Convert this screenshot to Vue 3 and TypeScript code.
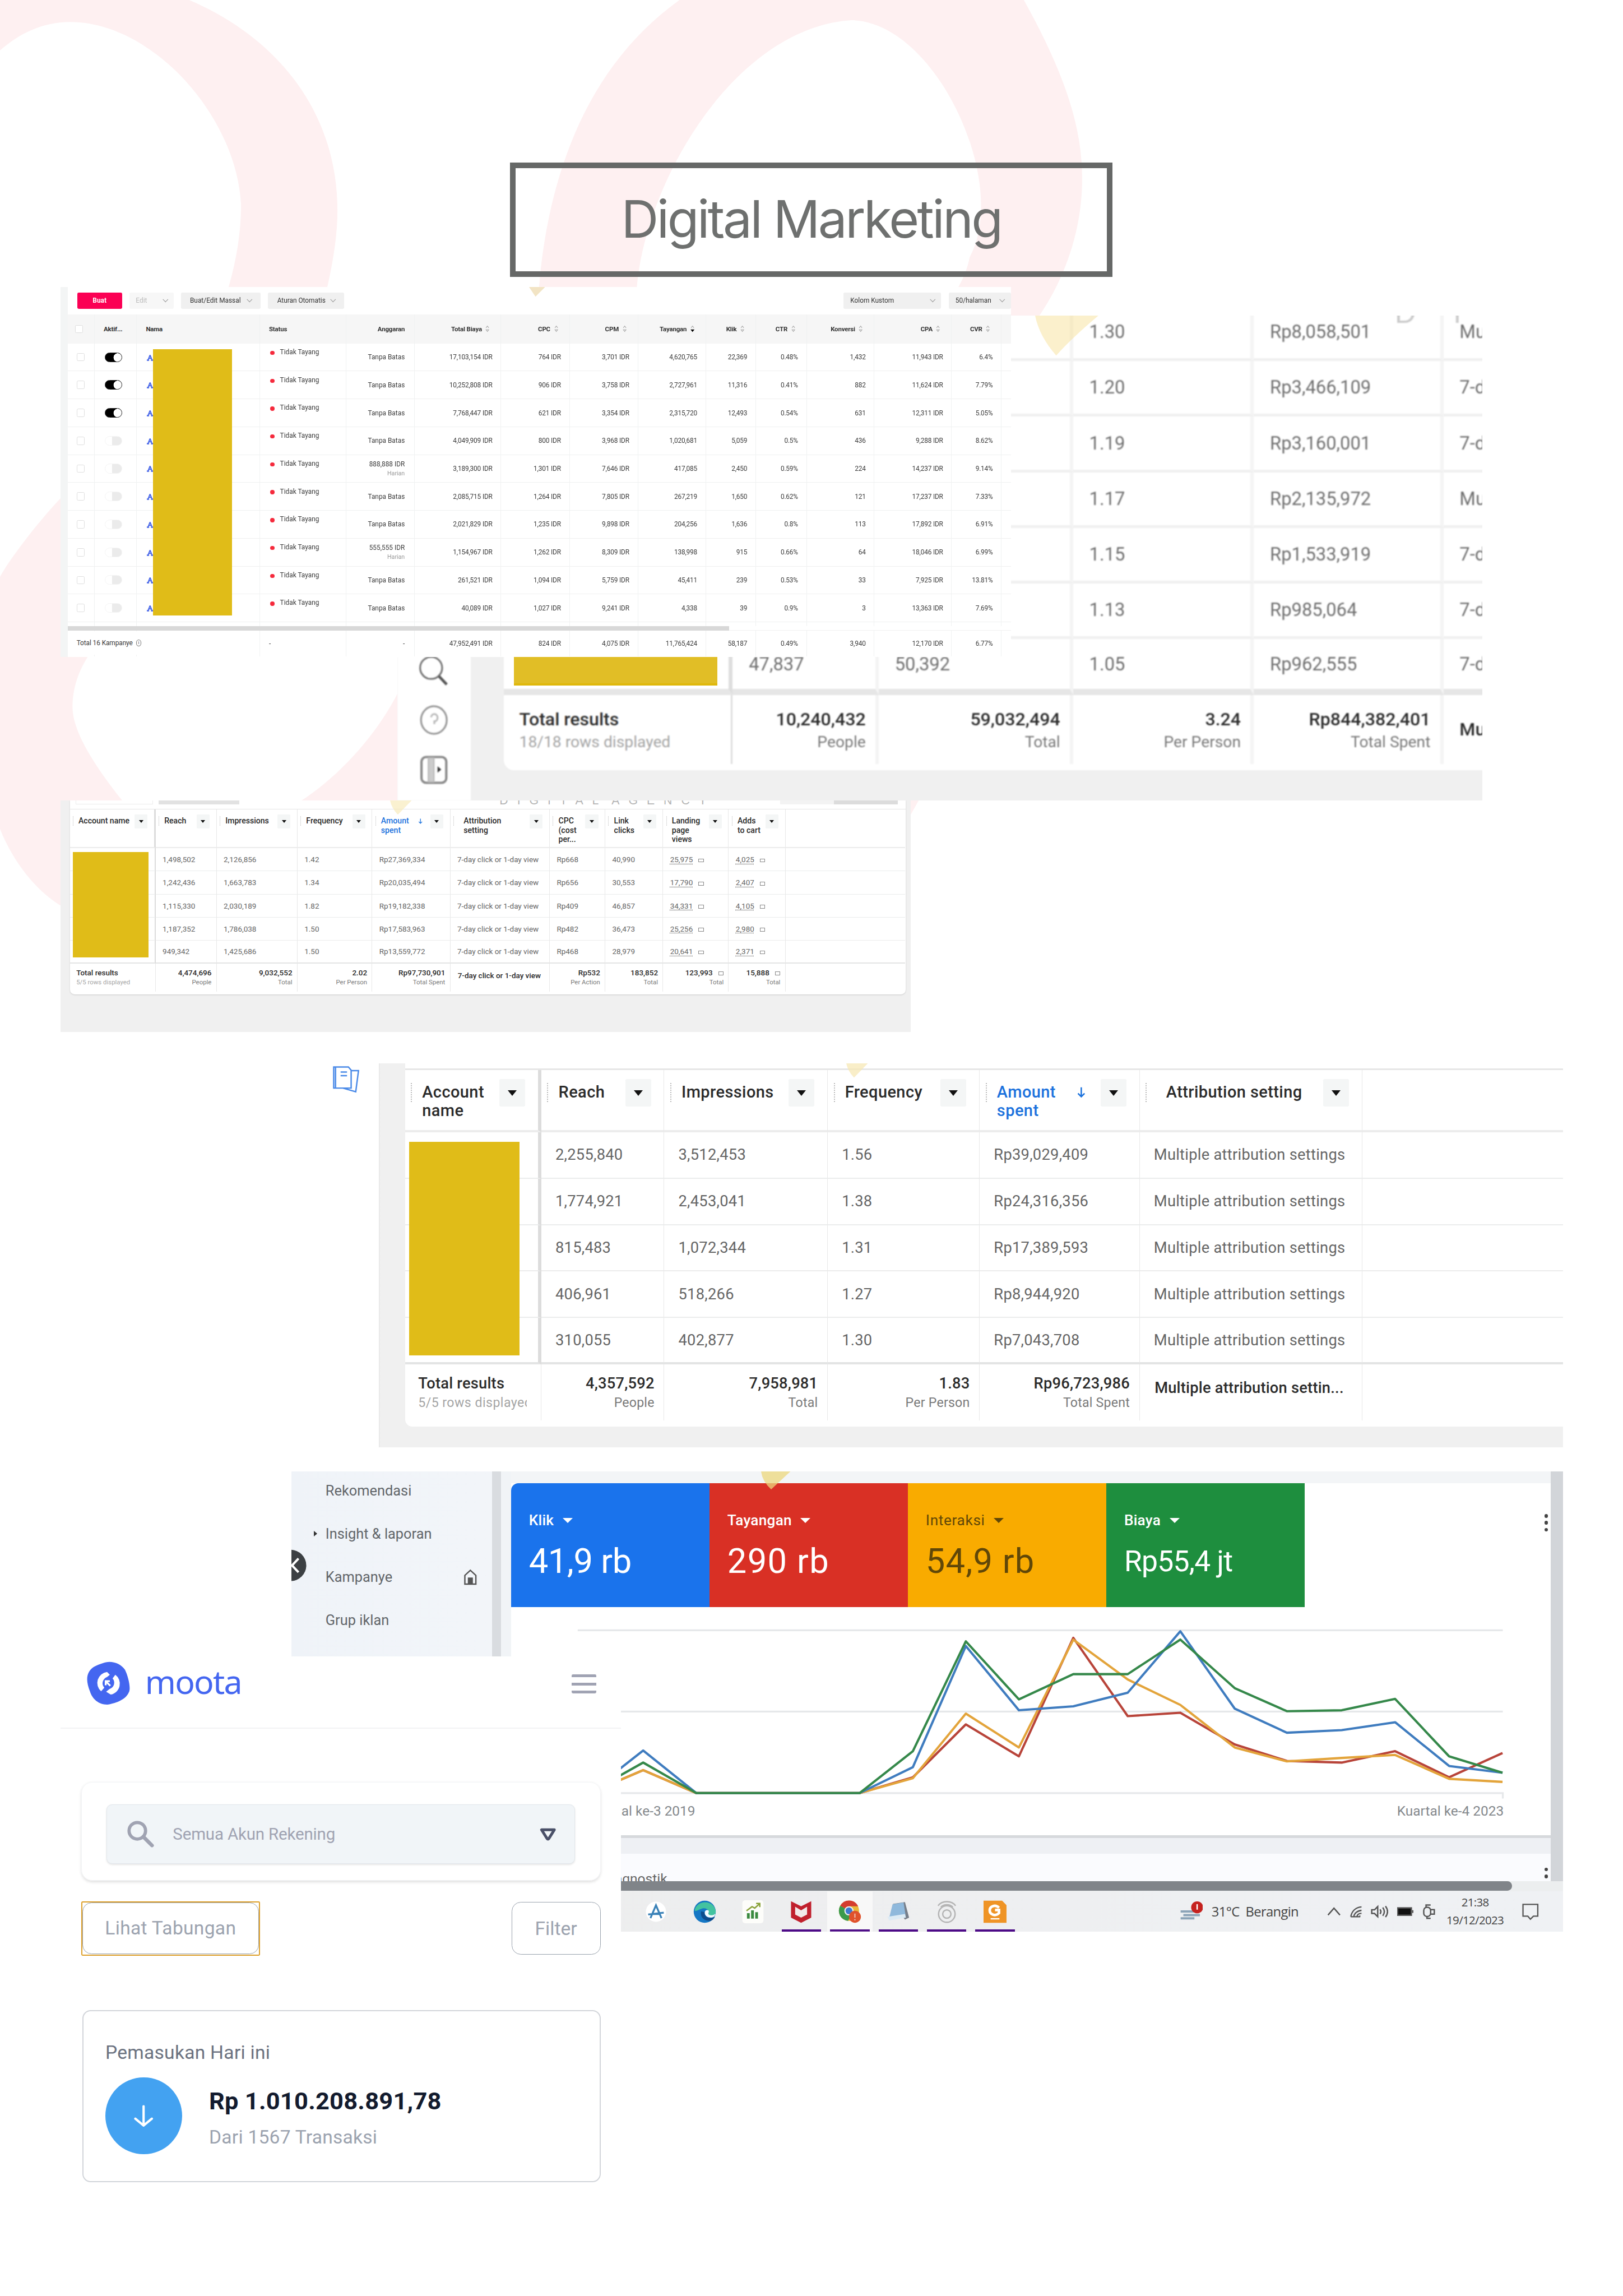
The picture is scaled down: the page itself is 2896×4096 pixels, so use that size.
<script setup lang="ts">
interface CampaignColumn {
  title: string
  width: number
  kind: 'check' | 'toggle' | 'name' | 'status' | 'budget' | 'number' | 'end'
  cells: string[]
  total: string
  sort?: 'idle' | 'desc'
}
interface AdsColumn {
  width: number
  head?: string[]
  sorted?: boolean
  frozen?: boolean
  link?: boolean
  indent?: number
  cells: string[]
  total?: string
  sub?: string
  align?: 'left' | 'right' | 'middle'
}

const blank = (n: number): string[] => Array.from({ length: n }, () => '')
const same = (text: string, n: number): string[] => Array.from({ length: n }, () => text)

/* Letter spacing that makes a line of text as wide as asked. */
function fit(text: string, font: string, width: number) {
  const ctx = document.createElement('canvas').getContext('2d')
  if (!ctx) return {}
  ctx.font = font
  const gap = (width - ctx.measureText(text).width) / (text.length - 1)
  return { letterSpacing: gap.toFixed(2) + 'px' }
}

const campaigns: CampaignColumn[] = [
  { title: '', width: 58, kind: 'check', cells: blank(10), total: '' },
  { title: 'Aktif...', width: 92, kind: 'toggle', cells: ['on', 'on', 'on', '', '', '', '', '', '', ''], total: '' },
  { title: 'Nama', width: 268, kind: 'name', cells: blank(10), total: '' },
  { title: 'Status', width: 188, kind: 'status', cells: same('Tidak Tayang', 10), total: '-' },
  {
    title: 'Anggaran', width: 149, kind: 'budget', total: '-',
    cells: ['Tanpa Batas', 'Tanpa Batas', 'Tanpa Batas', 'Tanpa Batas', '888,888 IDR', 'Tanpa Batas', 'Tanpa Batas', '555,555 IDR', 'Tanpa Batas', 'Tanpa Batas'],
  },
  {
    title: 'Total Biaya', width: 189, kind: 'number', sort: 'idle', total: '47,952,491 IDR',
    cells: ['17,103,154 IDR', '10,252,808 IDR', '7,768,447 IDR', '4,049,909 IDR', '3,189,300 IDR', '2,085,715 IDR', '2,021,829 IDR', '1,154,967 IDR', '261,521 IDR', '40,089 IDR'],
  },
  {
    title: 'CPC', width: 149, kind: 'number', sort: 'idle', total: '824 IDR',
    cells: ['764 IDR', '906 IDR', '621 IDR', '800 IDR', '1,301 IDR', '1,264 IDR', '1,235 IDR', '1,262 IDR', '1,094 IDR', '1,027 IDR'],
  },
  {
    title: 'CPM', width: 149, kind: 'number', sort: 'idle', total: '4,075 IDR',
    cells: ['3,701 IDR', '3,758 IDR', '3,354 IDR', '3,968 IDR', '7,646 IDR', '7,805 IDR', '9,898 IDR', '8,309 IDR', '5,759 IDR', '9,241 IDR'],
  },
  {
    title: 'Tayangan', width: 148, kind: 'number', sort: 'desc', total: '11,765,424',
    cells: ['4,620,765', '2,727,961', '2,315,720', '1,020,681', '417,085', '267,219', '204,256', '138,998', '45,411', '4,338'],
  },
  {
    title: 'Klik', width: 109, kind: 'number', sort: 'idle', total: '58,187',
    cells: ['22,369', '11,316', '12,493', '5,059', '2,450', '1,650', '1,636', '915', '239', '39'],
  },
  {
    title: 'CTR', width: 110.5, kind: 'number', sort: 'idle', total: '0.49%',
    cells: ['0.48%', '0.41%', '0.54%', '0.5%', '0.59%', '0.62%', '0.8%', '0.66%', '0.53%', '0.9%'],
  },
  {
    title: 'Konversi', width: 147.5, kind: 'number', sort: 'idle', total: '3,940',
    cells: ['1,432', '882', '631', '436', '224', '121', '113', '64', '33', '3'],
  },
  {
    title: 'CPA', width: 168.5, kind: 'number', sort: 'idle', total: '12,170 IDR',
    cells: ['11,943 IDR', '11,624 IDR', '12,311 IDR', '9,288 IDR', '14,237 IDR', '17,237 IDR', '17,892 IDR', '18,046 IDR', '7,925 IDR', '13,363 IDR'],
  },
  {
    title: 'CVR', width: 108.5, kind: 'number', sort: 'idle', total: '6.77%',
    cells: ['6.4%', '7.79%', '5.05%', '8.62%', '9.14%', '7.33%', '6.91%', '6.99%', '13.81%', '7.69%'],
  },
  { title: '', width: 20, kind: 'end', cells: blank(10), total: '' },
]

const adsWide: AdsColumn[] = [
  { width: 499, frozen: true, cells: blank(7), total: 'Total results', sub: '18/18 rows displayed', align: 'left' },
  { width: 318, cells: ['', '', '', '', '', '', '47,837'], total: '10,240,432', sub: 'People' },
  { width: 423.5, cells: ['', '', '', '', '', '', '50,392'], total: '59,032,494', sub: 'Total' },
  { width: 393.5, cells: ['1.30', '1.20', '1.19', '1.17', '1.15', '1.13', '1.05'], total: '3.24', sub: 'Per Person' },
  {
    width: 413, total: 'Rp844,382,401', sub: 'Total Spent',
    cells: ['Rp8,058,501', 'Rp3,466,109', 'Rp3,160,001', 'Rp2,135,972', 'Rp1,533,919', 'Rp985,064', 'Rp962,555'],
  },
  { width: 400, cells: ['Multiple', '7-day click', '7-day click', 'Multiple', '7-day click', '7-day click', '7-day click'], total: 'Multiple', align: 'middle' },
]

const adsSmall: AdsColumn[] = [
  { width: 187, head: ['Account name'], frozen: true, cells: blank(5), total: 'Total results', sub: '5/5 rows displayed', align: 'left' },
  { width: 133, head: ['Reach'], cells: ['1,498,502', '1,242,436', '1,115,330', '1,187,352', '949,342'], total: '4,474,696', sub: 'People' },
  { width: 176, head: ['Impressions'], cells: ['2,126,856', '1,663,783', '2,030,189', '1,786,038', '1,425,686'], total: '9,032,552', sub: 'Total' },
  { width: 163, head: ['Frequency'], cells: ['1.42', '1.34', '1.82', '1.50', '1.50'], total: '2.02', sub: 'Per Person' },
  {
    width: 170, head: ['Amount', 'spent'], sorted: true, total: 'Rp97,730,901', sub: 'Total Spent',
    cells: ['Rp27,369,334', 'Rp20,035,494', 'Rp19,182,338', 'Rp17,583,963', 'Rp13,559,772'],
  },
  { width: 216.5, head: ['Attribution', 'setting'], indent: 10, cells: same('7-day click or 1-day view', 5), total: '7-day click or 1-day view', align: 'middle' },
  { width: 121, head: ['CPC', '(cost', 'per...'], cells: ['Rp668', 'Rp656', 'Rp409', 'Rp482', 'Rp468'], total: 'Rp532', sub: 'Per Action' },
  { width: 126, head: ['Link', 'clicks'], cells: ['40,990', '30,553', '46,857', '36,473', '28,979'], total: '183,852', sub: 'Total' },
  { width: 143, head: ['Landing', 'page', 'views'], link: true, cells: ['25,975', '17,790', '34,331', '25,256', '20,641'], total: '123,993', sub: 'Total' },
  { width: 123.5, head: ['Adds', 'to cart'], link: true, cells: ['4,025', '2,407', '4,105', '2,980', '2,371'], total: '15,888', sub: 'Total' },
  { width: 261, cells: blank(5) },
]

const adsLarge: AdsColumn[] = [
  { width: 297, head: ['Account', 'name'], frozen: true, cells: blank(5), total: 'Total results', sub: '5/5 rows displayed', align: 'left' },
  { width: 268, head: ['Reach'], cells: ['2,255,840', '1,774,921', '815,483', '406,961', '310,055'], total: '4,357,592', sub: 'People' },
  { width: 356, head: ['Impressions'], cells: ['3,512,453', '2,453,041', '1,072,344', '518,266', '402,877'], total: '7,958,981', sub: 'Total' },
  { width: 331, head: ['Frequency'], cells: ['1.56', '1.38', '1.31', '1.27', '1.30'], total: '1.83', sub: 'Per Person' },
  {
    width: 348.5, head: ['Amount', 'spent'], sorted: true, total: 'Rp96,723,986', sub: 'Total Spent',
    cells: ['Rp39,029,409', 'Rp24,316,356', 'Rp17,389,593', 'Rp8,944,920', 'Rp7,043,708'],
  },
  { width: 485, head: ['Attribution setting'], indent: 20, cells: same('Multiple attribution settings', 5), total: 'Multiple attribution settin...', align: 'middle' },
  { width: 439, cells: blank(5) },
]

const adsPanels = [
  { name: 'small', columns: adsSmall },
  { name: 'large', columns: adsLarge },
]

const metrics = [
  { label: 'Klik', value: '41,9 rb', tone: 'blue', size: 75, width: 224 },
  { label: 'Tayangan', value: '290 rb', tone: 'red', size: 75, width: 221 },
  { label: 'Interaksi', value: '54,9 rb', tone: 'amber', size: 75, width: 236 },
  { label: 'Biaya', value: 'Rp55,4 jt', tone: 'green', size: 63, width: 237 },
]

const quarters = [1284, 1400.6, 1516.4, 1872, 1988, 2103.4, 2219, 2337.5, 2456, 2570.6, 2689, 2802.7, 2922, 3038.5, 3156, 3272.4]
const series = [
  { color: '#b8443a', ys: [3904, 3854, 3904, 3904, 3869.7, 3754.5, 3824, 3566, 3736.4, 3729, 3798, 3834, 3837.6, 3812.8, 3869.7, 3816.8] },
  { color: '#e3a43b', ys: [3904, 3854, 3904, 3904, 3871.7, 3731, 3804.7, 3570, 3656.7, 3712, 3804.7, 3835, 3827.5, 3821, 3873, 3879.7] },
  { color: '#3f7cbf', ys: [3903, 3811.4, 3904, 3904, 3847.6, 3583.8, 3723.7, 3715, 3685.5, 3551.6, 3720, 3772.6, 3767, 3749.8, 3845, 3859.7] },
  { color: '#35884a', ys: [3903, 3837.6, 3904, 3904, 3812.8, 3573.7, 3700, 3645, 3645, 3569.7, 3675.5, 3725.7, 3723.7, 3699, 3824, 3859.7] },
]
const points = (ys: number[]): string => ys.map((y, i) => `${quarters[i]},${y}`).join(' ')
</script>

<template>
  <div class="stage">
    <div class="canvas">
      <svg class="backdrop" viewBox="0 0 3535 5000" aria-hidden="true">
        <g fill="#fef0f1">
          <path d="M0 0H412C600 80 735 240 735 459C735 560 700 700 640 860L400 860C460 740 525 600 525 446C515 250 330 48 153 48C90 48 40 75 0 110Z" />
          <path d="M132 1085C80 1140 20 1220 0 1256V1805C30 1880 80 1940 132 1972V1743H266C200 1660 158 1590 158 1540C158 1500 170 1460 198 1420L300 1000Z" />
          <path d="M866 1510C820 1600 740 1690 654 1745H866Z" />
          <path d="M1173 640C1190 400 1270 150 1480 0H2230C2330 180 2357 290 2357 390C2357 500 2320 610 2255 700H2040C2074 640 2100 620 2112 560C2200 400 2040 48 1855 44C1600 60 1400 400 1386 640Z" />
          <path d="M1983 1743H2001L1983 1775Z" />
        </g>
      </svg>

      <h1 class="title"><span :style="fit('Digital Marketing', '400 113px Inter', 832)">Digital Marketing</span></h1>

      <!-- Ads table behind the campaign list -->
      <section class="panel wide">
        <aside class="rail">
          <svg viewBox="0 0 64 72" width="64" height="72" fill="none" stroke="#777" stroke-width="4">
            <circle cx="26" cy="30" r="24" /><path d="M43 48L60 66" stroke="#555" stroke-width="6" />
          </svg>
          <svg viewBox="0 0 64 72" width="64" height="72" fill="none" stroke="#999" stroke-width="4">
            <ellipse cx="32" cy="36" rx="28" ry="30" /><path d="M26 30a7 8 0 1 1 7 9v6" stroke="#bbb" />
          </svg>
          <svg viewBox="0 0 64 72" width="64" height="72" fill="none" stroke="#888" stroke-width="5">
            <rect x="5" y="8" width="54" height="56" rx="10" /><path d="M20 10h12v52h-12z" fill="#ccc" stroke="#bbb" stroke-width="3" /><path d="M40 28l8 7-8 7z" fill="#333" stroke="none" />
          </svg>
        </aside>
        <div class="board">
          <div class="ads">
            <div v-for="(c, i) in adsWide" :key="i" class="col" :class="{ frozen: c.frozen }" :style="{ width: c.width + 'px' }">
              <div v-for="(v, r) in c.cells" :key="r" class="cell">{{ v }}</div>
              <div class="sum" :class="c.align"><b>{{ c.total }}</b><span v-if="c.sub">{{ c.sub }}</span></div>
            </div>
          </div>
        </div>
        <div class="mask"></div>
        <div class="agency">DI</div>
        <svg class="drip" viewBox="0 0 138 87" width="138" height="87"><path d="M0 0H138C105 28 75 55 46 87C22 60 6 30 0 0Z" fill="#f5dc86" opacity=".42" /></svg>
      </section>

      <!-- Campaign list -->
      <section class="panel campaigns">
        <div class="bar">
          <span class="btn primary">Buat</span>
          <span class="btn muted" style="width: 96px">Edit<i class="chev"></i></span>
          <span class="btn" style="width: 174px">Buat/Edit Massal<i class="chev"></i></span>
          <span class="btn" style="width: 166px">Aturan Otomatis<i class="chev"></i></span>
          <span class="btn push" style="width: 213px">Kolom Kustom<i class="chev"></i></span>
          <span class="btn last" style="width: 136px">50/halaman<i class="chev"></i></span>
        </div>
        <div class="list">
          <div v-for="(c, i) in campaigns" :key="i" class="ccol" :class="c.kind" :style="{ width: c.width + 'px' }">
            <div class="chead">
              <i v-if="c.kind === 'check'" class="box"></i>
              <span>{{ c.title }}</span>
              <svg v-if="c.sort" viewBox="0 0 8 16" width="9" height="16" fill="none" stroke="#aaa" stroke-width="1.3">
                <path d="M1 6L4 2L7 6" /><path :fill="c.sort === 'desc' ? '#000' : 'none'" :stroke="c.sort === 'desc' ? '#000' : '#aaa'" d="M1 10L4 14L7 10Z" />
              </svg>
            </div>
            <div v-for="(v, r) in c.cells" :key="r" class="ccell">
              <i v-if="c.kind === 'check'" class="box"></i>
              <i v-else-if="c.kind === 'toggle'" class="toggle" :class="{ on: v }"></i>
              <svg v-else-if="c.kind === 'name'" viewBox="0 0 14 16" width="14" height="16" fill="none" stroke="#4a68e8" stroke-width="2.5">
                <path d="M7 3L3 13M7 3l4 10M4 10h6" /><path d="M0 14h5M9 14h5" stroke-width="3" />
              </svg>
              <template v-else-if="c.kind === 'status'"><i class="dot"></i><span>{{ v }}</span></template>
              <template v-else-if="c.kind === 'budget'"><span>{{ v }}</span><small v-if="v.endsWith('IDR')">Harian</small></template>
              <span v-else>{{ v }}</span>
            </div>
            <div class="cgap"></div>
            <div class="cfoot">{{ c.total }}</div>
          </div>
          <div class="count">Total 16 Kampanye <i>i</i></div>
          <div class="track"><i></i></div>
          <div class="mask"></div>
        </div>
        <svg class="drip" viewBox="0 0 35 21" width="35" height="21"><path d="M0 0H35L14 21Z" fill="#f2e4c4" /></svg>
      </section>

      <!-- Ads tables with headers -->
      <section v-for="p in adsPanels" :key="p.name" class="panel" :class="p.name">
        <svg v-if="p.name === 'large'" class="notes" viewBox="0 0 60 60" width="60" height="60" fill="none" stroke="#4a8ae8" stroke-width="3">
          <path d="M3 3h4v46H3zM7 3h28l6 7v39H7zM18 14h14M18 22h14M41 11h16l-6 46-28-8" />
        </svg>
        <div class="board">
          <div class="ads">
            <div v-for="(c, i) in p.columns" :key="i" class="col" :class="{ frozen: c.frozen }" :style="{ width: c.width + 'px' }">
              <div class="head">
                <template v-if="c.head">
                  <i class="grip"></i>
                  <span class="name" :class="{ sorted: c.sorted }" :style="{ marginLeft: (c.indent ?? 0) + 'px' }">
                    <span v-for="line in c.head" :key="line">{{ line }}</span>
                  </span>
                  <svg v-if="c.sorted" class="arrow" viewBox="0 0 20 24" fill="none" stroke="#1c72dd" stroke-width="3"><path d="M10 1v20M3 14l7 7 7-7" /></svg>
                  <i class="menu"></i>
                </template>
              </div>
              <div v-for="(v, r) in c.cells" :key="r" class="cell">
                <u v-if="c.link">{{ v }}</u><template v-else>{{ v }}</template><i v-if="c.link" class="tag"></i>
              </div>
              <div class="sum" :class="c.align"><b>{{ c.total }}<i v-if="c.link" class="tag"></i></b><span v-if="c.sub">{{ c.sub }}</span></div>
            </div>
          </div>
        </div>
        <div class="mask"></div>
        <template v-if="p.name === 'small'">
          <div class="scraps"><i></i><i></i><i></i><i></i></div>
          <div class="agency">DIGITAL AGENCY</div>
        </template>
        <svg class="drip" viewBox="0 0 47 31" width="47" height="31"><path d="M0 0H47L17 31Q4 18 0 0Z" fill="#f7e7b0" opacity=".7" /></svg>
      </section>

      <!-- Search ads overview -->
      <section class="panel google">
        <div class="screen">
          <nav>
            <span>Rekomendasi</span>
            <span class="open">Insight &amp; laporan</span>
            <span>Kampanye
              <svg viewBox="0 0 30 36" width="30" height="36" fill="none" stroke="#555" stroke-width="3"><path d="M3 33V14L15 3l12 11v19z" /><path d="M11 33V20h8v13" fill="#555" /></svg>
            </span>
            <span>Grup iklan</span>
          </nav>
          <div class="fold"><svg viewBox="0 0 70 70" width="70" height="70"><circle cx="35" cy="35" r="34" fill="#3c4043" /><path d="M52 20L38 35L52 50" fill="none" stroke="#fff" stroke-width="5" /></svg></div>
          <i class="gutter"></i>
          <div class="report">
            <div class="metrics">
              <div v-for="m in metrics" :key="m.label" class="metric" :class="m.tone">
                <span>{{ m.label }}<i></i></span>
                <strong :style="{ fontSize: m.size + 'px', ...fit(m.value, `400 ${m.size}px Roboto`, m.width) }">{{ m.value }}</strong>
              </div>
              <i class="dots"><b></b><b></b><b></b></i>
            </div>
            <svg class="chart" viewBox="1113 3499 2265 498" width="2265" height="498">
              <g stroke="#e6e8ea" stroke-width="4"><path d="M1258 3549.6H3273M1258 3726.4H3273M1258 3904H3273V3916" fill="none" /></g>
              <polyline v-for="s in series" :key="s.color" :points="points(s.ys)" fill="none" :stroke="s.color" stroke-width="5" stroke-linejoin="round" />
              <g font-family="Roboto, sans-serif" font-size="29.8" fill="#85898d" text-anchor="end">
                <text x="1514" y="3953">Kuartal ke-3 2019</text><text x="3275" y="3953">Kuartal ke-4 2023</text>
              </g>
            </svg>
            <div class="below"><span>Diagnostik</span><i class="dots"><b></b><b></b></i></div>
          </div>
          <i class="scroller"></i>
        </div>
        <div class="hscroll"><i></i></div>
        <div class="taskbar">
          <span class="app"><svg viewBox="0 0 50 50"><circle cx="25" cy="25" r="22" fill="#fff" /><path d="M13 39L25 11l12 28M16 30h19M8 31l34-4" fill="none" stroke="#3b82b8" stroke-width="4" /></svg></span>
          <span class="app"><svg viewBox="0 0 50 50"><circle cx="25" cy="25" r="24" fill="#1577c4" /><path d="M3 22C8-2 46-2 49 25c0 9-14 11-16 5 4-9-7-16-16-11C9 22 4 25 3 22z" fill="#43c3a0" /><path d="M17 24c-3 14 8 22 21 21 5-2 8-6 9-9-10 5-24 1-22-10z" fill="#0f4c8c" /><path d="M25 27c0-4 4-7 8-5 3 4-2 7 1 9 4 3 11 2 14-2-1 7-4 8-9 9-8 0-14-4-14-11z" fill="#f4fbff" /></svg></span>
          <span class="app"><svg viewBox="0 0 50 50"><rect x="2" width="46" height="50" rx="6" fill="#fdfdfa" /><path d="M15 40V28M24 40V22M33 40V26" stroke="#3a8a3f" stroke-width="6" /><path d="M11 23L23 14l6 3 10-9M32 7h8v8" fill="none" stroke="#8ba33a" stroke-width="3" /></svg></span>
          <span class="app run"><svg viewBox="0 0 50 50"><path d="M3 2l22 11L47 2v36L25 49 3 38z" fill="#c0202d" /><path d="M12 14l13 8 13-8v17l-13 7-13-7z" fill="#f1e9e9" /></svg></span>
          <span class="app run active"><svg viewBox="0 0 50 50"><circle cx="23" cy="23" r="22" fill="#e8b93a" /><path d="M23 23L4 12A22 22 0 0 1 43 13H23z" fill="#d43d2f" /><path d="M4 12A22 22 0 0 0 21 45l9-17-7-5z" fill="#3b9a4c" /><circle cx="23" cy="23" r="10" fill="#f3f3f3" /><circle cx="23" cy="23" r="7.500" fill="#3f7ad0" /><circle cx="36" cy="36" r="13" fill="#e0522c" /><path d="M36 29v9M36 41v3" stroke="#f5d9cf" stroke-width="2" /></svg></span>
          <span class="app run"><svg viewBox="0 0 50 50"><path d="M14 8l26-4 9 34-9 4z" fill="#777f8a" /><path d="M13 9l24-4 5 32-37 4z" fill="#8fb9dc" /><path d="M2 36l38-6 2 8-36 6z" fill="#dcebf5" /></svg></span>
          <span class="app run"><svg viewBox="0 0 50 50" fill="none" stroke="#b4b4b4" stroke-width="3"><circle cx="25" cy="30" r="18" /><circle cx="25" cy="30" r="9" /><path d="M6 12c8-12 30-12 38 0M12 15c6-7 20-7 26 0" /></svg></span>
          <span class="app run"><svg viewBox="0 0 52 50"><path d="M0 0h42l10 10v40H0z" fill="#ef9426" /><path d="M35 16c-8-8-21-4-21 6s13 14 21 6V21h-9" fill="none" stroke="#fff" stroke-width="6" /><path d="M16 41h20" stroke="#fff" stroke-width="3" /></svg></span>
          <span class="weather">
            <svg viewBox="0 0 50 44" width="50" height="44"><path d="M2 22h34M8 30h36M2 37h30" stroke="#8ca4b8" stroke-width="5" /><circle cx="38" cy="13" r="13" fill="#c5221f" /><path d="M38 6v12" stroke="#fff" stroke-width="3" /></svg>
            31°C&nbsp; Berangin
          </span>
          <span class="tray">
            <svg viewBox="0 0 30 24" width="30" height="24"><path d="M2 20L15 5l13 15" /></svg>
            <svg viewBox="0 0 30 30" width="28" height="30"><path d="M3 27C5 14 14 5 28 4M10 27c1-8 8-14 18-15M17 27c1-5 5-8 11-8M24 27v-3M3 27h22" /></svg>
            <svg viewBox="0 0 38 30" width="38" height="30"><path d="M2 11h6l7-7v22l-7-7H2zM20 10q4 5 0 10M26 6q7 9 0 18M32 3q9 12 0 24" /></svg>
            <svg viewBox="0 0 36 20" width="36" height="20"><rect x="1" y="2" width="30" height="16" fill="#111" /><path d="M34 7v6" /></svg>
            <svg viewBox="0 0 30 34" width="30" height="34"><rect x="3" y="8" width="15" height="20" rx="7" /><path d="M8 8V3h10M18 13h8v10h-8M10 28v4h8" /></svg>
          </span>
          <span class="clock"><span>21:38</span><span>19/12/2023</span></span>
          <svg viewBox="0 0 38 40" width="36" height="38" class="note"><path d="M2 3h34v27H26l-7 7-6-7H2z" /></svg>
        </div>
        <div class="agency">DIGITAL AGENCY</div>
        <svg class="drip" viewBox="0 0 64 39" width="64" height="39"><path d="M0 0H64L22 39Q3 22 0 0Z" fill="#ecd77c" opacity=".75" /></svg>
      </section>

      <!-- Bank account app -->
      <section class="panel moota">
        <header>
          <svg viewBox="0 0 94 94" width="94" height="94">
            <path d="M34 4C50-3 72 2 83 18C90 32 97 60 91 68C84 84 60 92 44 94C26 94 12 82 7 66C0 48-2 34 5 22C11 12 22 8 34 4Z" fill="#4466f0" />
            <path d="M44 23A24 24 0 0 0 31 65L38 57A14 14 0 0 1 44 34L50 29Z" fill="#fff" />
            <path d="M52 72A24 24 0 0 0 62 29L56 37A14 14 0 0 1 49 60L42 66Z" fill="#fff" />
            <path d="M41 52V43H50M42 44L51 53" fill="none" stroke="#fff" stroke-width="4" />
          </svg>
          <span class="logo" :style="fit('moota', '400 72px Noto Sans', 212)">moota</span>
          <i class="burger"></i>
        </header>
        <div class="finder">
          <div class="field">
            <svg viewBox="0 0 58 58" width="58" height="58" fill="none" stroke="#a0a3b2"><circle cx="22" cy="22" r="18" stroke-width="7" /><path d="M35 35L54 54" stroke-width="8" stroke-linecap="round" /></svg>
            <span :style="fit('Semua Akun Rekening', '400 36px Roboto', 354)">Semua Akun Rekening</span>
            <svg class="tri" viewBox="0 0 36 28" width="36" height="28"><path d="M4 4H32L20 23Q18 26 16 23Z" fill="none" stroke="#4a5068" stroke-width="6" stroke-linejoin="round" /></svg>
          </div>
        </div>
        <div class="actions">
          <div class="focus"><span class="outline"><span :style="fit('Lihat Tabungan', '400 41px Roboto', 286)">Lihat Tabungan</span></span></div>
          <span class="outline filter"><span :style="fit('Filter', '400 41px Roboto', 92)">Filter</span></span>
        </div>
        <div class="income">
          <span class="label" :style="fit('Pemasukan Hari ini', '400 41px Roboto', 359)">Pemasukan Hari ini</span>
          <div class="amount">
            <span class="disc"><svg viewBox="0 0 42 48" width="42" height="48" fill="none" stroke="#fff" stroke-width="5" stroke-linecap="round"><path d="M21 3V44M3 30L21 45L39 30" /></svg></span>
            <div>
              <strong :style="fit('Rp 1.010.208.891,78', '700 53px Roboto', 506)">Rp 1.010.208.891,78</strong>
              <small :style="fit('Dari 1567 Transaksi', '400 41px Roboto', 367)">Dari 1567 Transaksi</small>
            </div>
          </div>
        </div>
      </section>
    </div>
  </div>
</template>

<style>
html, body { margin: 0; background: #fff; overflow: hidden; }
</style>

<style scoped>
.stage { width: 2896px; height: 4096px; overflow: hidden; background: #fff; font-family: Roboto, "Liberation Sans", sans-serif; }
.canvas { position: relative; width: 3535px; height: 5000px; zoom: 0.81924; }
.canvas * { box-sizing: border-box; }
.backdrop { position: absolute; left: 0; top: 0; width: 3535px; height: 5000px; }
.panel { position: absolute; overflow: hidden; }
.drip, .mask, .agency { position: absolute; }
.mask { background: #e0bc18; }
svg { flex: none; display: block; }

.title { position: absolute; left: 1111px; top: 354px; width: 1312px; height: 249px; margin: 0; border: 13px solid #666867; display: flex; align-items: center; justify-content: center; font: 400 113px/1 Inter, sans-serif; color: #6e706f; white-space: nowrap; padding-bottom: 4px; }

/* ---- campaign list ---- */
.campaigns { left: 132px; top: 625px; width: 2070px; height: 805px; background: #fff; border-left: 17px solid #f3f5f5; font-size: 14.500px; color: #3c3c3c; }
.campaigns .bar, .campaigns .list { filter: blur(0.6px); }
.bar { display: flex; align-items: center; height: 60px; padding: 4px 0 4px 20px; gap: 16px; }
.btn { height: 36px; border-radius: 3px; background: #f0f0f0; display: flex; align-items: center; justify-content: space-between; padding: 0 20px 2px; color: #333; white-space: nowrap; }
.btn.primary { width: 98px; background: #fb0054; color: #fff; font-weight: 700; justify-content: center; }
.btn.muted { background: #f7f7f7; color: #bbb; padding: 0 14px 2px; }
.btn.push { margin-left: auto; }
.btn.push, .btn.last { padding: 0 15px 2px; }
.chev { width: 8px; height: 8px; border: solid #999; border-width: 0 1.5px 1.5px 0; transform: rotate(45deg) translate(-2px, -2px); }
.list { position: relative; display: flex; height: 745px; }
.ccol { flex: none; border-right: 2px solid #f0f2f2; }
.ccol.end { border: 0; }
.chead { height: 63px; display: flex; align-items: center; gap: 8px; padding: 0 20px; background: #f6f6f6; font-weight: 700; font-size: 14px; color: #333; letter-spacing: -0.2px; }
.ccell { height: 60.700px; border-bottom: 2px solid #eff0f0; display: flex; align-items: center; padding: 0 20px; }
.number .chead, .number .ccell, .budget .chead, .budget .ccell { justify-content: flex-end; }
.number .chead { padding-right: 24px; }
.number .ccell, .number .cfoot { letter-spacing: -0.2px; white-space: nowrap; padding-right: 18px; }
.budget .ccell { flex-direction: column; justify-content: center; align-items: flex-end; gap: 4px; }
.ccell small { font-size: 13px; color: #999; }
.check .chead, .check .ccell, .toggle .ccell { padding: 0; justify-content: center; }
.status .ccell { align-items: flex-start; padding-top: 10px; gap: 12px; }
.name .ccell { padding-left: 22px; }
.dot { width: 9px; height: 9px; border-radius: 50%; background: #f52a3c; margin: 6px 0 0 3px; }
.box { width: 17px; height: 18px; border: 1.5px solid #dedede; border-radius: 3px; background: #fff; }
.ccell .toggle { width: 37px; height: 21px; border-radius: 11px; background: linear-gradient(90deg, #fff 40%, #ebebeb 40%); border: 1px solid #f4f4f4; margin-right: 8px; }
.ccell .toggle.on { background: radial-gradient(circle at 27px 9.500px, #fff 9px, #000 9.500px); border: 1px solid #222; }
.cgap { height: 20px; }
.cfoot { height: 54px; display: flex; align-items: center; padding: 0 20px; }
.number .cfoot, .budget .cfoot { justify-content: flex-end; }
.count { position: absolute; left: 0; bottom: 4px; width: 415px; height: 52px; padding-left: 19px; background: #fff; display: flex; align-items: center; gap: 7px; letter-spacing: -0.1px; }
.count i { width: 12px; height: 14px; border: 1px solid #777; border-radius: 50%; font: 9px/12px Roboto; text-align: center; }
.track { position: absolute; left: 0; top: 679px; width: 100%; height: 9px; border-bottom: 2px solid #f0f0f0; background: #fff; }
.track i { display: block; width: 1440px; height: 9px; background: #d8d8d8; }
.list .mask { left: 185px; top: 75px; width: 172px; height: 580px; }
.campaigns .drip { left: 1004px; top: 0; }

/* ---- ads tables, sized in em ---- */
.board { flex: none; background: #fff; }
.ads { display: flex; }
.col { flex: none; }
.cell, .head, .sum { border-right: 0.07em solid #e8e8e8; }
.col:last-child .cell, .col:last-child .head, .col:last-child .sum { border-right: 0; }
.frozen .cell, .frozen .head { border-right: 0.22em solid #dcdcdc; }
.cell { height: var(--row); display: flex; align-items: center; padding-left: 0.920em; border-bottom: 0.1em solid #ebecec; font-size: 0.980em; color: #666; white-space: nowrap; }
.col .cell:nth-last-child(2) { border-bottom: 0.17em solid #e3e4e4; }
.sum { height: var(--sum); display: flex; flex-direction: column; align-items: flex-end; padding: 0.650em 0.600em 0 0.850em; gap: 0.150em; white-space: nowrap; overflow: hidden; color: #7a7a7a; }
.sum b { font-weight: 500; font-size: 0.980em; line-height: 1.15; color: #2c2c2c; }
.sum span { font-size: 0.830em; line-height: 1.25; }
.sum.left { align-items: flex-start; }
.sum.left span { color: #a5a5a5; }
.sum.middle { align-items: flex-start; justify-content: center; padding: 0 0 0.500em 0.950em; }
.head { height: var(--head); display: flex; align-items: flex-start; border-bottom: 0.16em solid #ececec; padding: 0.850em 0.820em 0 0.380em; line-height: 1.16em; }
.grip { width: 0; height: 1.2em; border-left: 0.09em dotted #bbb; margin-right: 0.650em; }
.name { display: flex; flex-direction: column; font-weight: 500; color: #2b2b2b; white-space: nowrap; }
.name.sorted { color: #1c72dd; }
.arrow { width: 0.600em; height: 1em; margin: 0.100em 0.950em 0 auto; }
.menu { width: 1.650em; height: 1.750em; margin: -0.250em 0 0 auto; border-radius: 0.100em; background: #f4f6f6; display: flex; align-items: center; justify-content: center; }
.arrow + .menu { margin-left: 0; }
.menu::after { content: ""; border: 0.310em solid transparent; border-top: 0.370em solid #111; border-bottom: 0; }
u { text-decoration: underline dotted; text-underline-offset: 0.150em; }
.tag { display: inline-block; width: 0.700em; height: 0.500em; border: 0.080em solid #888; margin: 0.250em 0 0 0.750em; }

.wide { left: 866px; top: 687px; width: 2363px; height: 1056px; display: flex; background: #f0f0f0; font-size: 40px; --row: 121.200px; --sum: 150px; }
.rail { flex: none; width: 159px; background: #fff; display: flex; flex-direction: column; justify-content: flex-end; gap: 36px; padding: 0 0 31px 47px; filter: blur(1px); }
.wide .board { width: 2200px; height: 1012px; margin: -22px 0 0 72px; border-radius: 0 0 0 22px; filter: blur(1.2px); }
.wide .cell { font-size: 40px; padding-left: 35px; border-bottom: 7px solid #f0f0f0; color: #707070; }
.wide .col .cell:nth-last-child(2) { border-bottom: 14px solid #e6e6e6; }
.wide .cell, .wide .sum { border-right: 8px solid #f4f4f4; }
.wide .frozen .cell { border-right: 9px solid #dedede; }
.wide .frozen .sum { border-right: 4px solid #dedede; }
.wide .sum { padding: 31px 21px 0 34px; gap: 5px; }
.wide .sum span { font-size: 34.500px; }
.wide .sum.middle { padding: 0 0 0 35px; }
.wide .mask { left: 253px; top: 740px; width: 444px; height: 66px; border-bottom: 5px solid #dfb80c; background: #e1be26; }
.wide .agency { left: 2172px; top: -38px; font: 400 64px/1 "Liberation Sans"; letter-spacing: 81px; color: #ccc; filter: blur(1px); }
.wide .drip { left: 1389px; top: 0; }

.small { left: 132px; top: 1743px; width: 1852px; height: 504px; background: #f0f0f0; font-size: 16.800px; --row: 50.200px; --sum: 61px; --head: 84px; padding-left: 20px; }
.small .board { width: 1820px; height: 423px; border-radius: 0 0 10px 10px; box-shadow: 0 1px 3px #ccc; padding-top: 20px; }
.small .ads { border-top: 2px solid #e4e4e4; margin-top: -1px; }
.small .head { font-size: 17.200px; }
.small .mask { left: 27px; top: 112px; width: 164px; height: 230px; }
.small .drip { left: 717px; top: 0; }
.small .drip path { opacity: 0.6; }
.small .agency { left: 956px; top: -12px; font: 400 26px/1 "Liberation Sans"; letter-spacing: 19.500px; color: #b5b5b5; white-space: nowrap; word-spacing: -16px; }
.scraps { position: absolute; left: 33px; top: 0; display: flex; height: 9px; }
.scraps i { height: 9px; }
.scraps i:nth-child(1) { width: 168px; border: solid #ececec; border-width: 0 2px 2px; }
.scraps i:nth-child(2) { width: 176px; margin-left: 12px; background: #e2e2e2; }
.scraps i:nth-child(3) { width: 117px; margin-left: 1178px; background: #f3f3f3; }
.scraps i:nth-child(4) { width: 140px; background: #dcdcdc; }

.large { left: 720px; top: 2315px; width: 2684px; height: 837px; background: linear-gradient(90deg, #fff 105px, #e4e4e4 105px, #f0f0f0 108px); font-size: 34px; --row: 101.300px; --sum: 121px; --head: 135.500px; display: flex; }
.notes { margin: 6px 0 0 4px; }
.large .board { width: 2530px; height: 792px; margin-left: 98px; border-radius: 0 0 0 16px; padding-top: 11px; }
.large .ads { border-top: 4px solid #e6e6e6; }
.large .name { font-size: 1.040em; letter-spacing: 0.015em; }
.large .cell { letter-spacing: 0.010em; }
.large .sum { padding-top: 0.680em; letter-spacing: 0.008em; }
.large .sum.middle { padding-top: 0; }
.large .mask { left: 171px; top: 171px; width: 240px; height: 465px; }
.large .drip { left: 1123px; top: 0; }
.large .sum.left span { width: 237px; overflow: hidden; letter-spacing: 0.020em; }

/* ---- search ads overview ---- */
.google { left: 635px; top: 3204px; width: 2770px; height: 1002px; background: #f1f4f7; }
.screen { display: flex; height: 893px; }
nav { flex: none; width: 437px; background: linear-gradient(90deg, #eff3f8, #f2f5f9); padding: 0 32px 0 74px; font-size: 31px; color: #62666a; }
nav span { display: flex; align-items: center; justify-content: space-between; height: 94px; white-space: nowrap; }
nav span:first-child { margin-top: -5px; }
nav .open { position: relative; }
nav .open::before { content: ""; position: absolute; left: -26px; border: 7px solid transparent; border-left: 8px solid #333; border-right: 0; }
.fold { position: absolute; left: -37px; top: 170px; }
.gutter { flex: none; width: 19px; background: #d9dce0; margin-right: 22px; }
.report { flex: none; width: 2265px; background: #fff; }
.metrics { display: flex; padding-top: 26px; background: linear-gradient(#f3f5f7 26px, #fff 26px); position: relative; }
.metric { width: 432.200px; height: 269px; color: #fff; padding: 62px 0 0 39px; display: flex; flex-direction: column; }
.metric span { display: flex; align-items: center; gap: 19px; font-size: 32px; line-height: 38px; font-weight: 500; letter-spacing: 0.3px; }
.metric span i { border: 11px solid transparent; border-top: 12px solid; border-bottom: 0; }
.metric strong { font-weight: 400; line-height: 78px; margin-top: 32px; white-space: nowrap; }
.blue { background: #1a73ec; border-top-left-radius: 16px; }
.red { background: #d93025; }
.amber { background: #f9ab00; color: #604708; }
.amber span { font-weight: 400; letter-spacing: 0.8px; }
.green { background: #1e8e3e; }
.dots { position: absolute; right: 6px; display: flex; flex-direction: column; gap: 7px; }
.dots b { width: 8px; height: 8px; border-radius: 50%; background: #444; }
.metrics .dots { top: 93px; }
.below { position: relative; height: 100px; border-top: 7px solid #d6d9dc; background: linear-gradient(#eef0f4 34px, #fafbfe 34px); padding: 66px 0 0 199px; font-size: 30px; line-height: 44px; color: #666; overflow: hidden; }
.below .dots { top: 64px; }
.scroller { flex: none; width: 27px; background: #d2d5d9; }
.hscroll { height: 22px; background: #eceeef; }
.hscroll i { display: block; width: 2658px; height: 20px; border-radius: 10px; background: #808489; }
.taskbar { height: 87px; background: linear-gradient(90deg, #ececec, #eff1f4); display: flex; align-items: center; padding-left: 751px; font: 29px "Open Sans", sans-serif; color: #444; letter-spacing: -0.8px; }
.app { width: 86px; height: 87px; margin-right: 19.500px; display: flex; align-items: center; justify-content: center; }
.app svg { width: 50px; height: 50px; }
.app.run { border-bottom: 5px solid #4c0a86; padding-top: 5px; }
.app.active { background: #f8f8f8; outline: 7px solid #f8f8f8; outline-offset: -1px; clip-path: inset(0 -7px); }
.weather { display: flex; align-items: center; gap: 19px; margin-left: 340px; width: 320px; white-space: nowrap; }
.tray { display: flex; align-items: center; gap: 19px; width: 259px; }
.tray svg, .note { fill: none; stroke: #555; stroke-width: 3; }
.clock { display: flex; flex-direction: column; align-items: center; font-size: 25px; line-height: 39px; width: 128px; }
.note { margin-left: 39px; }
.google .agency { left: 1418px; top: -36px; font: 700 44px/1 "Liberation Sans"; letter-spacing: 28px; word-spacing: -22px; color: #b0b4b9; white-space: nowrap; }
.google .drip { left: 1023px; top: 0; }

/* ---- bank account app ---- */
.moota { left: 132px; top: 3607px; width: 1221px; height: 1200px; background: #fff; color: #9ca3af; }
.moota header { display: flex; align-items: center; height: 158px; padding: 0 54px 40px 57px; border-bottom: 3px solid #f2f2f4; }
.logo { font: 400 72px/94px "Noto Sans", sans-serif; color: #4466f0; margin: -6px 0 0 33px; }
.burger { width: 54px; height: 42px; margin-left: auto; border-radius: 3px; background: linear-gradient(#a0a3b3 6px, transparent 6px 18px, #a0a3b3 18px 24px, transparent 24px 36px, #a0a3b3 36px); position: relative; top: 2px; }
.finder { margin: 116px 45px 0; height: 214px; border: 1px solid #f3f4f6; border-radius: 24px; box-shadow: 0 3px 6px rgba(0, 0, 0, 0.12); padding: 47px 54px; }
.field { height: 130px; border: 2px solid #e2e7ec; border-radius: 12px; background: #f1f5f8; box-shadow: 0 2px 4px rgba(0, 0, 0, 0.1); display: flex; align-items: center; padding: 0 40px 0 44px; font-size: 36px; color: #a0a3b2; white-space: nowrap; }
.field span { margin-left: 41px; }
.tri { margin-left: auto; }
.actions { display: flex; justify-content: space-between; align-items: center; margin: 45px 45px 0; font-size: 41px; white-space: nowrap; }
.focus { width: 389px; height: 119px; border: 3px solid #dda02c; border-radius: 3px; }
.outline { height: 113px; border: 2px solid #9aa3ae; border-radius: 20px; display: flex; align-items: center; justify-content: center; }
.filter { width: 194px; height: 115px; }
.income { margin: 118px 45px 0 47px; height: 375px; border: 2.500px solid #d2d5da; border-radius: 18px; padding: 65px 48px 0; }
.label { display: block; font-size: 41px; line-height: 52px; color: #6b7280; white-space: nowrap; }
.amount { display: flex; align-items: center; margin-top: 27px; gap: 59px; white-space: nowrap; }
.disc { width: 167px; height: 168px; border-radius: 50%; background: #43a2f1; display: flex; align-items: center; justify-content: center; }
.amount div { display: flex; flex-direction: column; gap: 17px; padding-top: 11px; }
.amount strong { font-size: 53px; line-height: 66px; color: #131b2e; }
.amount small { font-size: 41px; line-height: 56px; }
</style>
